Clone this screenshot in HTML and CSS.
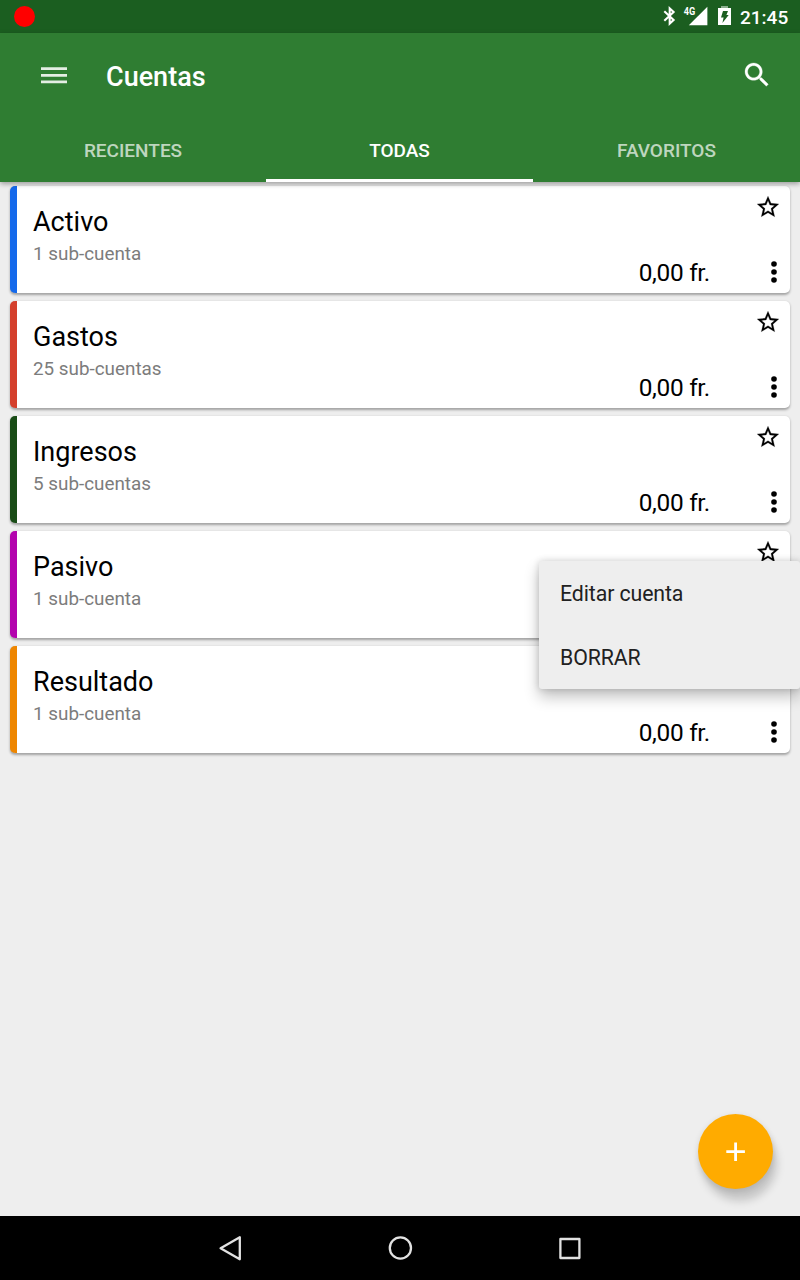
FILE: index.html
```html
<!DOCTYPE html>
<html lang="es">
<head>
<meta charset="utf-8">
<title>Cuentas</title>
<link rel="stylesheet" href="styles.css">
</head>
<body>
<svg class="defs" width="0" height="0">
  <symbol id="star" viewBox="0 0 24 24"><path stroke="#000" stroke-width=".2" d="M22 9.24l-7.19-.62L12 2 9.19 8.63 2 9.24l5.46 4.73L5.82 21 12 17.27 18.18 21l-1.63-7.03L22 9.24zM12 15.4l-3.76 2.27 1-4.28-3.32-2.88 4.38-.38L12 6.1l1.71 4.04 4.38.38-3.32 2.88 1 4.28L12 15.4z"/></symbol>
  <symbol id="more" viewBox="0 0 8 24"><circle cx="4" cy="4" r="2.8"/><circle cx="4" cy="12" r="2.8"/><circle cx="4" cy="20" r="2.8"/></symbol>
</svg>
<div class="screen">
  <div class="status">
    <span class="record"></span>
    <svg class="status-icons" viewBox="660 0 80 33">
      <path fill="none" stroke="#fff" stroke-width="2.1" d="M664.3 11.3l9.3 8.8-3.9 3.5V8.4l3.9 3.5-9.3 8.8"/>
      <path fill="#fff" d="M707.4 6.8v18.5h-18.6z"/>
      <text class="network" x="683.8" y="14.9" textLength="11.5" lengthAdjust="spacingAndGlyphs">4G</text>
      <path fill="#8dae8f" d="M721 6h7v2h-7z"/>
      <path fill="#fff" fill-rule="evenodd" d="M718 8h13v17h-13zM723 11h5l-1.6 4h2.3l-6.3 8 1.2-5.6h-2.6z"/>
    </svg>
    <span class="clock">21:45</span>
  </div>
  <header class="appbar">
    <div class="toolbar">
      <svg class="menu-icon" viewBox="0 0 26 17"><path fill="#e4eee4" d="M0 .3h26v2.7H0zM0 7h26v2.7H0zM0 13.6h26v2.7H0z"/></svg>
      <h1 class="title">Cuentas</h1>
      <svg class="search" viewBox="0 0 24 24"><path fill="#fff" stroke="#fff" stroke-width=".2" d="M15.5 14h-.79l-.28-.27C15.41 12.59 16 11.11 16 9.5 16 5.91 13.09 3 9.5 3S3 5.91 3 9.5 5.91 16 9.5 16c1.61 0 3.09-.59 4.23-1.57l.27.28v.79l5 4.99L20.49 19l-4.99-5zm-6 0C7.01 14 5 11.99 5 9.5S7.01 5 9.5 5 14 7.01 14 9.5 11.99 14 9.5 14z"/></svg>
    </div>
    <nav class="tabs">
      <div class="tab">RECIENTES</div>
      <div class="tab active">TODAS</div>
      <div class="tab">FAVORITOS</div>
    </nav>
  </header>
  <main class="list">
    <article class="card blue">
      <div class="info"><div class="name">Activo</div><div class="sub">1 sub-cuenta</div></div>
      <div class="balance">0,00 fr.</div>
      <div class="actions"><svg class="star"><use href="#star"/></svg><svg class="more"><use href="#more"/></svg></div>
    </article>
    <article class="card red">
      <div class="info"><div class="name">Gastos</div><div class="sub">25 sub-cuentas</div></div>
      <div class="balance">0,00 fr.</div>
      <div class="actions"><svg class="star"><use href="#star"/></svg><svg class="more"><use href="#more"/></svg></div>
    </article>
    <article class="card green">
      <div class="info"><div class="name">Ingresos</div><div class="sub">5 sub-cuentas</div></div>
      <div class="balance">0,00 fr.</div>
      <div class="actions"><svg class="star"><use href="#star"/></svg><svg class="more"><use href="#more"/></svg></div>
    </article>
    <article class="card purple">
      <div class="info"><div class="name">Pasivo</div><div class="sub">1 sub-cuenta</div></div>
      <div class="actions"><svg class="star"><use href="#star"/></svg></div>
      <div class="popup"><div class="option">Editar cuenta</div><div class="option">BORRAR</div></div>
    </article>
    <article class="card orange">
      <div class="info"><div class="name">Resultado</div><div class="sub">1 sub-cuenta</div></div>
      <div class="balance">0,00 fr.</div>
      <div class="actions"><svg class="star"><use href="#star"/></svg><svg class="more"><use href="#more"/></svg></div>
    </article>
    <div class="fab"><svg class="plus" viewBox="0 0 20 20"><path fill="#fff" d="M8.2.4H11v7.9h7.9v2.8H11V19H8.2v-7.9H.3V8.3h7.9z"/></svg></div>
  </main>
  <footer class="navbar">
    <svg class="nav-icon" viewBox="0 0 28 28"><path d="M23.8 3.3v22L4.6 14.3z"/></svg>
    <svg class="nav-icon" viewBox="0 0 28 28"><circle cx="14.4" cy="14" r="10.6"/></svg>
    <svg class="nav-icon" viewBox="0 0 28 28"><path d="M4.4 5h19v19h-19z"/></svg>
  </footer>
</div>
</body>
</html>
```
FILE: styles.css
```css
* { box-sizing: border-box; }
body { margin: 0; font-family: Roboto, sans-serif; }
svg { display: block; flex: none; }
.defs { position: absolute; }
.screen { width: 800px; height: 1280px; display: flex; flex-direction: column; background: #eee; overflow: hidden; }

.status { height: 33px; flex: none; display: flex; align-items: center; padding: 0 11px 0 13.5px; background: #1b5e20; color: #fff; }
.record { width: 21px; height: 21px; margin-top: .5px; border-radius: 50%; background: #f00; }
.status-icons { width: 80px; height: 33px; margin-left: auto; }
.network { font-size: 10px; font-weight: 700; fill: #fff; }
.clock { width: 49px; font-size: 19px; font-weight: 500; line-height: 33px; padding-top: 1px; white-space: nowrap; }

.appbar { height: 149px; flex: none; display: flex; flex-direction: column; background: #2f7d32; color: #fff; box-shadow: 0 2px 5px rgba(0,0,0,.35); position: relative; z-index: 1; }
.toolbar { height: 85px; display: flex; align-items: center; padding: 0 27px 0 41px; }
.menu-icon { width: 26px; height: 17px; margin-top: .5px; }
.title { margin: 3px auto 0 39px; font-size: 27px; font-weight: 500; line-height: 32px; }
.search { width: 32px; height: 32px; margin-top: -2px; }
.tabs { height: 64px; display: grid; grid-template-columns: 266px 267px 267px; }
.tab { display: flex; align-items: center; justify-content: center; font-size: 19px; font-weight: 500; color: rgba(255,255,255,.7); border-bottom: 3px solid transparent; padding-top: 4px; }
.active { color: #fff; border-color: #fff; }

.list { flex: 1; position: relative; display: flex; flex-direction: column; gap: 8px; padding: 4px 10px; }
.card { height: 107px; flex: none; display: flex; position: relative; background: #fff; border-left: 7px solid; border-radius: 5px; box-shadow: 0 1.5px 2.5px rgba(0,0,0,.32); }
.blue { border-color: #1469eb; }
.red { border-color: #d43f2c; }
.green { border-color: #194c16; }
.purple { border-color: #b304ad; z-index: 1; }
.orange { border-color: #ee8600; }
.info { flex: 1; padding: 20px 0 0 16px; }
.name { font-size: 27px; line-height: 32px; color: #000; }
.sub { font-size: 18.85px; line-height: 22px; margin-top: 5px; color: #7c7c7c; }
.balance { align-self: flex-end; font-size: 24.4px; letter-spacing: -.3px; line-height: 28px; padding-bottom: 6px; color: #000; }
.actions { width: 80px; display: flex; flex-direction: column; justify-content: space-between; align-items: flex-end; padding: 9px 9px 9px 0; }
.star { width: 26px; height: 26px; margin-top: -1px; }
.more { width: 8px; height: 24px; margin-right: 3px; }

.popup { position: absolute; left: 522px; top: 30px; width: 261px; height: 128px; background: #eee; border-radius: 3px; box-shadow: 0 8px 15px rgba(0,0,0,.24), 0 0 7px rgba(0,0,0,.16); }
.option { height: 64px; padding: 1px 21px 0; font-size: 21.3px; letter-spacing: -.1px; line-height: 64px; color: #212121; }

.fab { position: absolute; right: 27px; bottom: 27px; width: 75px; height: 75px; border-radius: 50%; display: flex; align-items: center; justify-content: center; background: #ffab00; box-shadow: 4px 12px 9px rgba(0,0,0,.17), 0 2px 6px rgba(0,0,0,.12); }
.plus { width: 20px; height: 20px; }

.navbar { height: 64px; flex: none; display: flex; align-items: center; justify-content: center; gap: 142px; background: #000; }
.nav-icon { width: 28px; height: 28px; fill: none; stroke: #e2e2e2; stroke-width: 2.3; stroke-linejoin: round; }
```
